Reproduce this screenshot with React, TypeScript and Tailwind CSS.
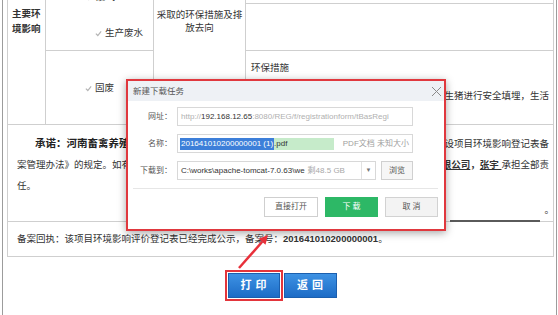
import React from 'react';

const Check: React.FC = () => (
  <svg width="7" height="7" viewBox="0 0 8 8" className="shrink-0 mr-[3px]">
    <path d="M1 4.2 L3.2 6.3 L7 1.5" fill="none" stroke="#b4b4b4" strokeWidth="1.4" />
  </svg>
);

const DownloadDialog: React.FC = () => (
  <div className="absolute left-[126px] top-[79px] w-[320px] h-[152px] border-2 border-[#e0383e] bg-white shadow-[0_2px_8px_rgba(0,0,0,0.35)]">
    <div className="h-[20px] bg-[#eef1f5] flex items-center justify-between pl-[5px] pr-[2px] text-[8.5px] text-[#555]">
      <span>新建下载任务</span>
      <svg width="11" height="11" viewBox="0 0 11 11">
        <path d="M1 1 L10 10 M10 1 L1 10" stroke="#8a8a8a" strokeWidth="1" />
      </svg>
    </div>

    <div className="mt-[6px] flex items-center h-[19px]">
      <span className="w-[44px] text-right text-[8px] text-[#555]">网址：</span>
      <div className="ml-[5px] w-[236px] h-full border border-[#d8d8d8] flex items-center px-[3px] text-[8px] text-[#b0b0b0] overflow-hidden whitespace-nowrap">
        http://<span className="text-[#333]">192.168.12.65</span>:8080/REG/f/registrationform/tBasRegi
      </div>
    </div>

    <div className="mt-[8px] flex items-center h-[19px]">
      <span className="w-[44px] text-right text-[8px] text-[#555]">名称：</span>
      <div className="ml-[5px] w-[236px] h-full border border-[#d8d8d8] flex items-center pl-[2px] pr-[3px] text-[8px] overflow-hidden whitespace-nowrap">
        <span className="bg-[#3d7fd9] text-white h-[12px] leading-[12px] px-[1px]">201641010200000001 (1)</span>
        <span className="bg-[#c6ebca] text-[#333] h-[12px] leading-[12px] w-[60px]">.pdf</span>
        <span className="ml-auto text-[#a0a0a0]">PDF文档 未知大小</span>
      </div>
    </div>

    <div className="mt-[8px] flex items-center h-[19px]">
      <span className="w-[44px] text-right text-[8px] text-[#555]">下载到：</span>
      <div className="ml-[5px] w-[199px] h-full border border-[#d8d8d8] flex items-center text-[8px] overflow-hidden whitespace-nowrap">
        <span className="pl-[3px] text-[#333]">C:\works\apache-tomcat-7.0.63\we</span>
        <span className="ml-[3px] text-[#a8a8a8]">剩48.5 GB</span>
        <span className="ml-auto w-[14px] h-full border-l border-[#e2e2e2] flex items-center justify-center text-[6px] text-[#777]">▼</span>
      </div>
      <span className="ml-[5px] w-[32px] h-full border border-[#d0d0d0] bg-[#f6f6f6] flex items-center justify-center text-[8px] text-[#555]">浏览</span>
    </div>

    <div className="mt-[8px] ml-[5px] mr-[6px] border-t border-[#e6e6e6]" />

    <div className="mt-[8px] flex justify-end pr-[6px] gap-[7px] text-[8px]">
      <span className="w-[54px] h-[20px] border border-[#cfcfcf] bg-white flex items-center justify-center text-[#555]">直接打开</span>
      <span className="w-[53px] h-[20px] bg-[#2db866] flex items-center justify-center text-white">下 载</span>
      <span className="w-[53px] h-[20px] border border-[#d2d2d2] bg-[#f3f3f3] flex items-center justify-center text-[#555]">取 消</span>
    </div>
  </div>
);

export default function App() {
  return (
    <div className="relative w-[558px] h-[315px] overflow-hidden bg-white text-[#333] font-['Liberation_Sans','Noto_Sans_CJK_SC',sans-serif]">
      <div className="ml-[2px] w-[555px] h-full border-x border-[#9c9c9c] pl-[4px] pr-[2px]">
        {/* table */}
        <div className="border-x border-b border-[#cfcfcf] text-[9.5px]">
          <div className="flex h-[125px] border-b border-[#cfcfcf]">
            <div className="w-[38px] border-r border-[#cfcfcf] pl-[4px] pt-[6px] font-bold leading-[15px]">主要环境影响</div>

            <div className="w-[108px] border-r border-[#cfcfcf] flex flex-col">
              <div className="h-[51px] border-b border-[#cfcfcf] flex flex-col">
                <div className="mt-[-10px] h-[14px] flex items-center pl-[40px]"><Check />废气</div>
                <div className="mt-[22px] h-[14px] flex items-center pl-[49px]"><Check />生产废水</div>
              </div>
              <div className="pt-[30px] pl-[39px] h-[14px] flex items-center box-content"><Check />固废</div>
            </div>

            <div className="w-[92px] border-r border-[#cfcfcf] text-center pt-[8px] px-[2px] leading-[13px]">采取的环保措施及排放去向</div>

            <div className="flex-1 flex flex-col">
              <div className="mt-[3px] h-[48px] border-y border-[#cfcfcf]" />
              <div className="pt-[10px] pl-[5px] leading-[14px]">环保措施</div>
              <div className="mt-[14px] pr-[4px] text-right leading-[14px] whitespace-nowrap">对养殖场生产过程中产生的粪便及病死生猪进行安全填埋，生活</div>
            </div>
          </div>

          <div className="border-b border-[#cfcfcf] pt-[8px] pl-[9px] pr-[4px]">
            <div className="flex justify-between h-[21px] leading-[21px] whitespace-nowrap">
              <span className="pl-[18px] font-bold text-[10.5px] text-[#222]">承诺：河南畜禽养殖有限公司</span>
              <span>建设项目环境影响登记表备</span>
            </div>
            <div className="flex justify-between h-[21px] leading-[21px] whitespace-nowrap">
              <span>案管理办法》的规定。如有违反</span>
              <span>
                <span className="font-bold underline">河南畜禽养殖有限公司</span>
                <span className="font-bold">，</span>
                <span className="font-bold underline">张宇&nbsp;</span>
                承担全部责
              </span>
            </div>
            <div className="h-[21px] leading-[21px]">任。</div>
            <div className="flex justify-end items-end h-[25px]">
              <span className="w-[90px] border-b-2 border-[#5a5a5a] mb-[-1px] mr-[4px]" />
              <span className="mb-[7px] mr-[-5px] leading-none">。</span>
            </div>
          </div>

          <div className="h-[34px] flex items-center pl-[9px] whitespace-nowrap">
            备案回执：该项目环境影响评价登记表已经完成公示，备案号：<b className="font-bold">201641010200000001</b>。
          </div>
        </div>

        <div className="mt-[13px] flex justify-center items-center gap-[1px]">
          <div className="border-2 border-[#e3353b] p-[1px]">
            <span className="w-[52px] h-[25px] flex items-center justify-center border border-[#1b5fae] bg-gradient-to-b from-[#3d92e4] to-[#1d6cc6] text-white font-bold text-[11px] tracking-[4px] pl-[4px]">打印</span>
          </div>
          <span className="w-[53px] h-[25px] flex items-center justify-center border border-[#1b5fae] bg-gradient-to-b from-[#3d92e4] to-[#1d6cc6] text-white font-bold text-[11px] tracking-[4px] pl-[4px]">返回</span>
        </div>
      </div>

      <DownloadDialog />

      <svg className="absolute left-0 top-0 pointer-events-none" width="558" height="315">
        <line x1="239" y1="268" x2="262" y2="242" stroke="#e8303a" strokeWidth="2.5" />
        <polygon points="268,235 265.5,244.8 258.7,238.8" fill="#e8303a" />
      </svg>
    </div>
  );
}
